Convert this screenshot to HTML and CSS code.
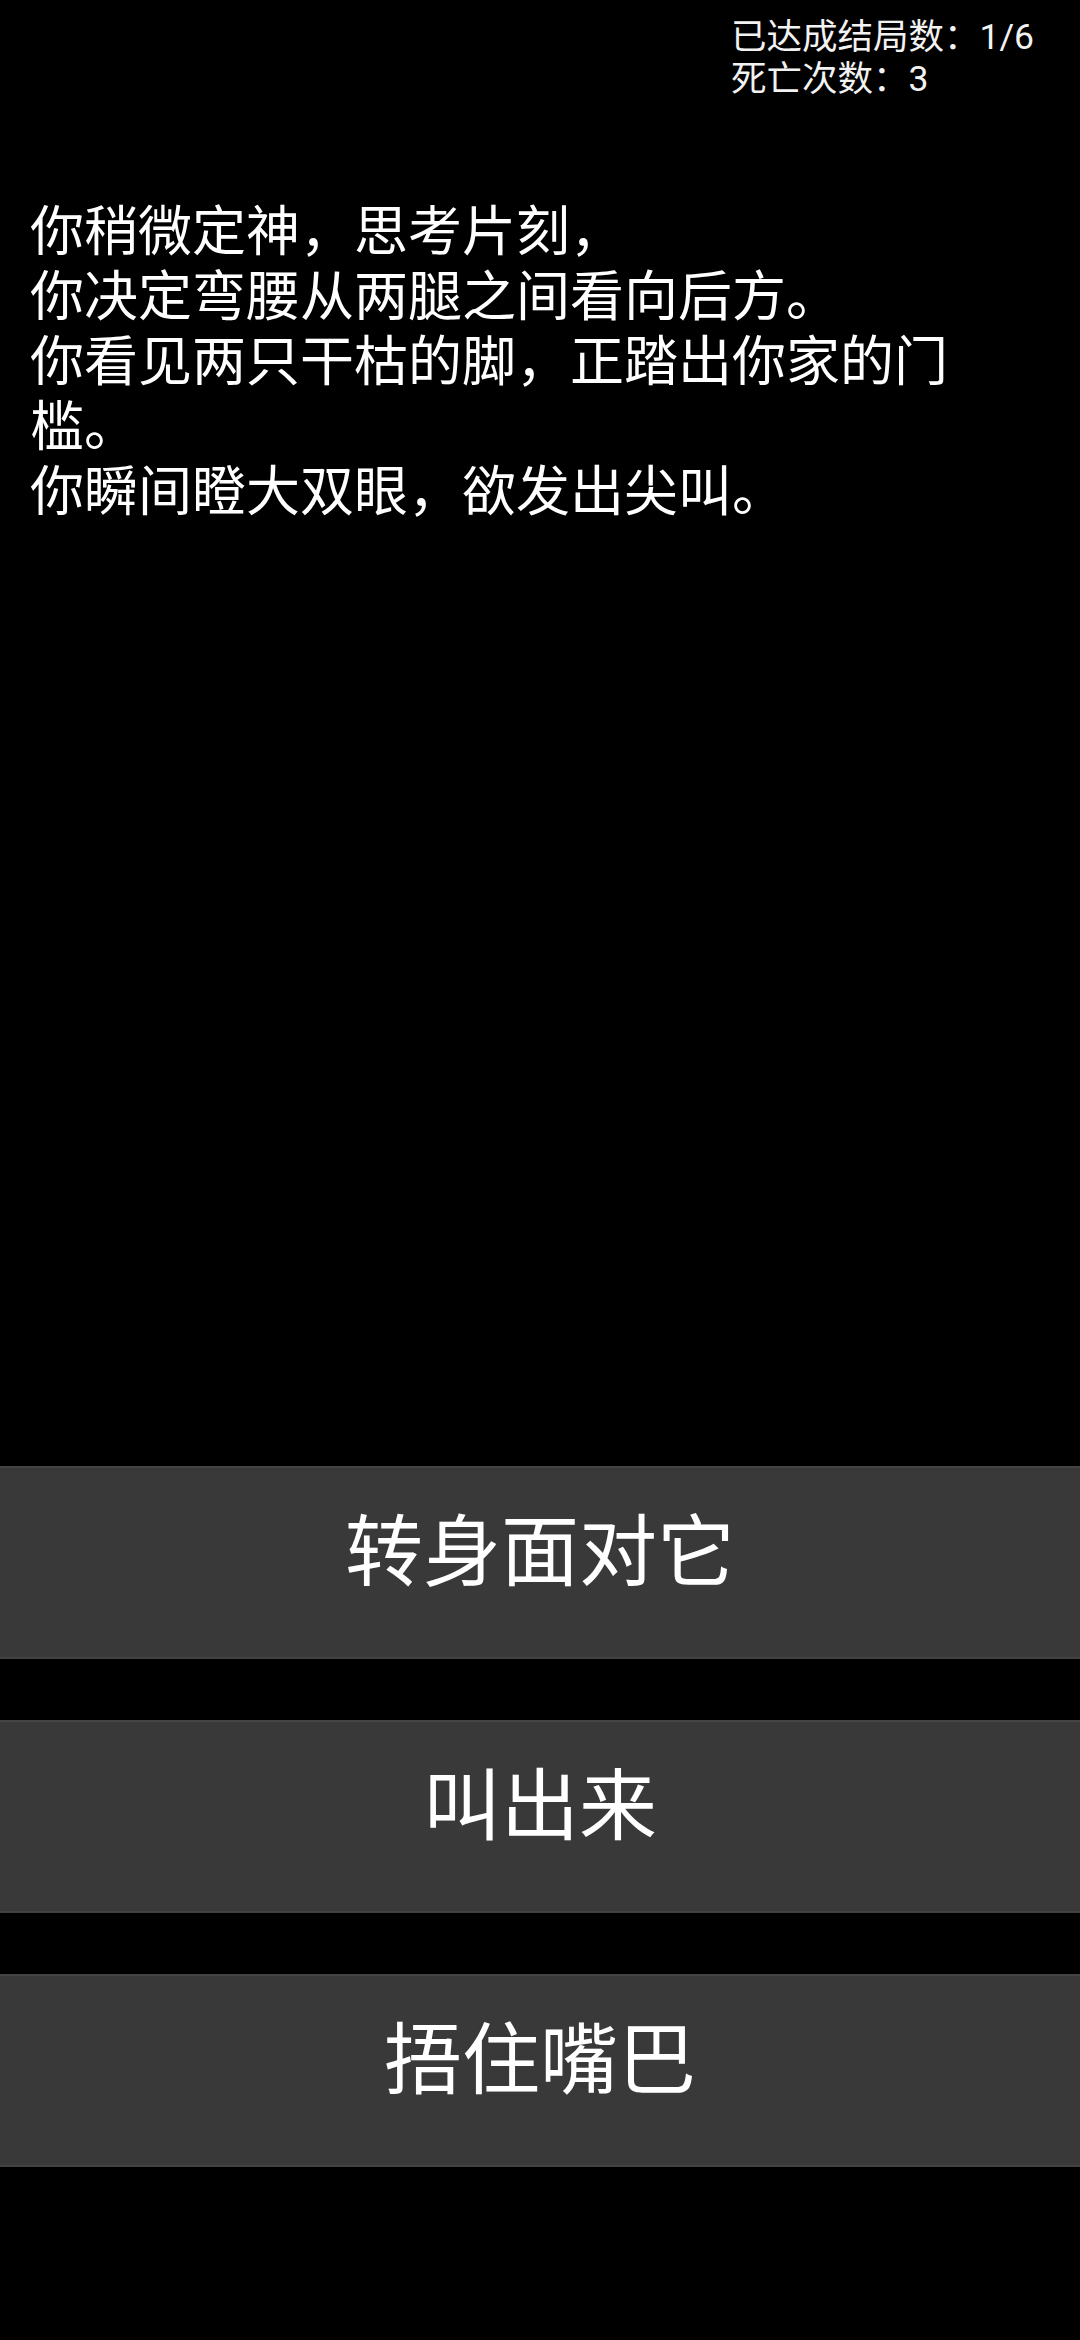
FILE: index.html
```html
<!DOCTYPE html>
<html lang="zh-CN">
<head>
<meta charset="utf-8">
<meta name="viewport" content="width=1080">
<title>游戏</title>
<link rel="stylesheet" href="styles.css">
</head>
<body>
<div class="screen">
  <header class="stats">
    <div class="stats-box">
      <div class="stat">已达成结局数：1/6</div>
      <div class="stat">死亡次数：3</div>
    </div>
  </header>
  <main class="story">
    <p class="story-text">你稍微定神，思考片刻，<br>你决定弯腰从两腿之间看向后方。<br>你看见两只干枯的脚，正踏出你家的门槛。<br>你瞬间瞪大双眼，欲发出尖叫。</p>
  </main>
  <nav class="choices">
    <button class="choice">转身面对它</button>
    <button class="choice">叫出来</button>
    <button class="choice">捂住嘴巴</button>
  </nav>
</div>
</body>
</html>
```
FILE: styles.css
```css
html, body {
  margin: 0;
  padding: 0;
  background: #000;
}
body {
  font-family: Roboto, "Noto Sans CJK SC", sans-serif;
  color: #fff;
}
.screen {
  min-height: 2340px;
  display: flex;
  flex-direction: column;
}
.stats {
  display: flex;
  justify-content: flex-end;
  padding: 16px 46px 0 0;
}
.stats-box {
  display: flex;
  flex-direction: column;
}
.stat {
  font-size: 35.5px;
  line-height: 42px;
  color: #f2f2f2;
}
.story {
  padding: 100px 110px 0 30px;
}
.story-text {
  margin: 0;
  font-size: 54px;
  line-height: 65px;
}
.choices {
  margin-top: auto;
  display: flex;
  flex-direction: column;
  gap: 61px;
  padding-bottom: 173px;
}
.choice {
  display: flex;
  align-items: center;
  justify-content: center;
  height: 193px;
  margin: 0;
  padding: 0 0 18px 0;
  border: 0;
  background: #393939;
  box-shadow: inset 0 2px 0 #444444, inset 0 -2px 0 #424242;
  color: #fff;
  font-family: Roboto, "Noto Sans CJK SC", sans-serif;
  font-size: 78px;
  line-height: 1;
}
```
